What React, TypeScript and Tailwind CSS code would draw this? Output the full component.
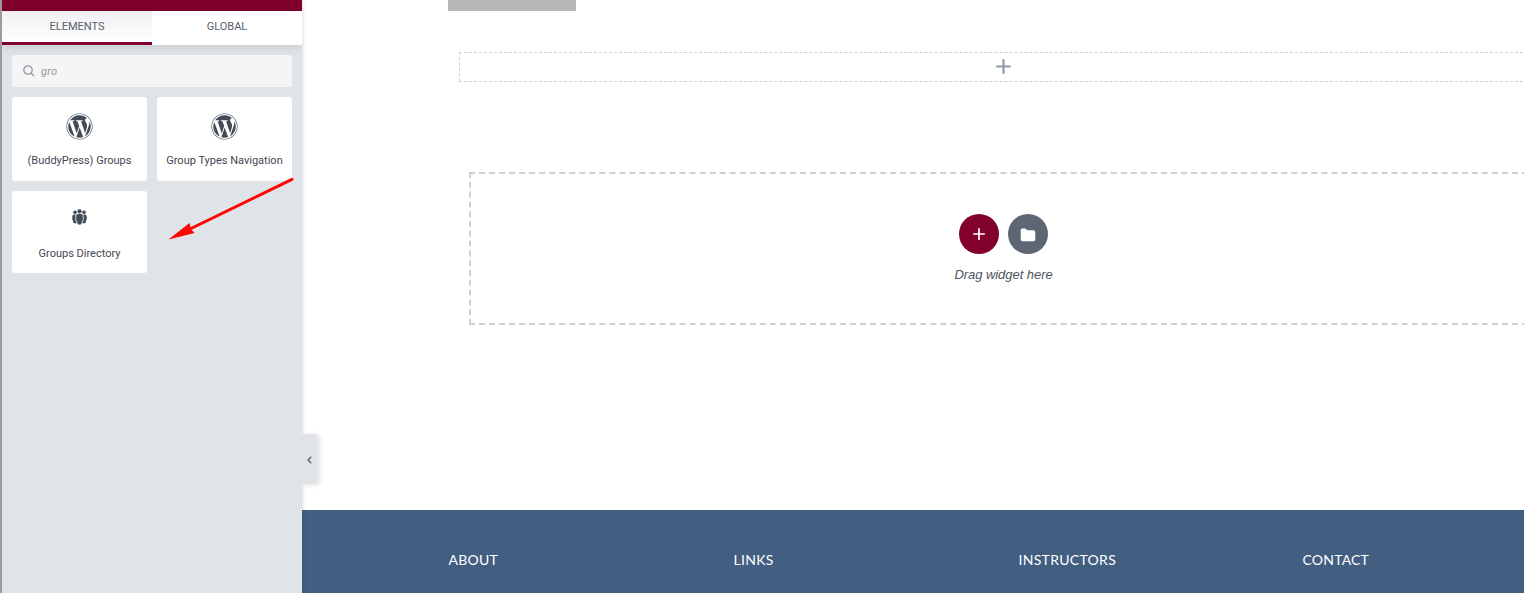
import type { ReactNode } from "react";
import { FaWordpress } from "react-icons/fa";

function GroupsIcon() {
  return (
    <svg width="15" height="16" viewBox="0 0 15 16" fill="currentColor" stroke="currentColor" strokeWidth="0.2">
      <circle cx="7.5" cy="2.2" r="2" />
      <circle cx="3" cy="3.3" r="1.7" />
      <circle cx="12" cy="3.3" r="1.7" />
      <path d="M4.2 7.2Q4.2 4.8 7.5 4.8T10.8 7.2V10.2Q10.8 12 9.6 12.8V14.2Q9.6 15.5 7.5 15.5T5.4 14.2V12.8Q4.2 12 4.2 10.2Z" />
      <path d="M3.7 5.6Q0.3 5.2 0.3 7.8V9.8Q0.3 11 1.2 11.7V13Q1.3 14.3 3.2 14.3Q4.3 14.3 4.5 13.7V13.1Q3.3 12.2 3.3 10.3V7.2Q3.3 6.3 3.7 5.6Z" />
      <path d="M11.3 5.6Q14.7 5.2 14.7 7.8V9.8Q14.7 11 13.8 11.7V13Q13.7 14.3 11.8 14.3Q10.7 14.3 10.5 13.7V13.1Q11.7 12.2 11.7 10.3V7.2Q11.7 6.3 11.3 5.6Z" />
    </svg>
  );
}

function Plus({ size, stroke }: { size: number; stroke: number }) {
  return (
    <svg width={size} height={size} viewBox="0 0 14 14" fill="none" stroke="currentColor" strokeWidth={stroke} strokeLinecap="round">
      <path d="M7 1V13M1 7H13" />
    </svg>
  );
}

function Widget({ icon, label, className }: { icon: ReactNode; label: string; className: string }) {
  return (
    <div className={`flex flex-col items-center rounded-[3px] bg-white text-[#434c56] ${className}`}>
      <div className="flex h-[27px] items-start justify-center">{icon}</div>
      <div className="whitespace-nowrap text-[11px] leading-[14px] text-[#3f4852]">{label}</div>
    </div>
  );
}

function Panel() {
  return (
    <aside className="relative z-10 flex h-full w-[302px] shrink-0 flex-col border-l-2 border-[#9b9b9d] bg-[#e0e3e8] font-[Roboto,sans-serif] shadow-[0_0_5px_rgba(0,0,0,0.2)]">
      <div className="flex h-[55px] shrink-0 flex-col overflow-hidden">
        <div className="h-[11px] shrink-0 bg-[#82002e]" />
        <div className="flex h-[34px] shrink-0 bg-white text-[11px] leading-[31px] text-[#556068] shadow-[0_2px_10px_rgba(0,0,0,0.12)]">
          <div className="w-[150px] border-b-[3px] border-[#82002e] bg-linear-to-b from-[#f0f0f3] to-white text-center">ELEMENTS</div>
          <div className="w-[150px] text-center">GLOBAL</div>
        </div>
      </div>
      <div className="mx-2.5 flex h-8 shrink-0 items-center rounded-[3px] bg-[#f5f5f5] pl-[11px] text-[#8d99a5]">
        <svg width="12" height="12" viewBox="0 0 12 12" fill="none" stroke="currentColor" strokeWidth="1.3" strokeLinecap="round">
          <circle cx="5" cy="5" r="4.2" />
          <path d="M8.2 8.2L10.7 10.7" />
        </svg>
        <span className="ml-1.5 pt-0.5 text-[11px] italic leading-4 tracking-[0.2px]">gro</span>
      </div>
      <div className="mx-2.5 mt-2.5 grid grid-cols-2 gap-2.5">
        <Widget className="h-[84px] gap-3.5 pt-4" icon={<FaWordpress size={27} />} label="(BuddyPress) Groups" />
        <Widget className="h-[84px] gap-3.5 pt-4" icon={<FaWordpress size={27} />} label="Group Types Navigation" />
        <Widget className="h-[82px] gap-[11px] pt-[18px]" icon={<GroupsIcon />} label="Groups Directory" />
      </div>
      <svg className="absolute left-[164px] top-[174px]" width="132" height="70" viewBox="166 174 132 70">
        <path d="M292 179.3L188 230" stroke="#ff0505" strokeWidth="3" strokeLinecap="round" />
        <path d="M168.5 239.5L189.5 223L191 229L194.5 233Z" fill="#ff0505" />
      </svg>
      <div className="absolute left-[300px] top-[434px] flex h-[50px] w-[15px] items-center rounded-r-[3px] bg-[#e0e3e8] pl-1 text-[#556068] shadow-[3px_1px_5px_rgba(0,0,0,0.12)]">
        <svg width="7" height="8" viewBox="0 0 6 8" fill="none" stroke="currentColor" strokeWidth="1.3" className="mt-0.5">
          <path d="M4.8 0.8L1.5 4L4.8 7.2" />
        </svg>
      </div>
    </aside>
  );
}

const footerLinks = [
  { label: "ABOUT", style: "tracking-[0.25px]" },
  { label: "LINKS", style: "tracking-[0.3px]" },
  { label: "INSTRUCTORS", style: "tracking-[0.3px]" },
  { label: "CONTACT", style: "tracking-[0.2px]" },
];

export default function App() {
  return (
    <div className="flex h-[593px] w-full overflow-hidden bg-white">
      <Panel />
      <main className="flex min-w-0 flex-1 flex-col overflow-hidden">
        <div className="ml-[146px] h-[11px] w-32 shrink-0 bg-[#b7b7b7]" />
        <div className="ml-[157px] mt-[41px] flex h-[30px] w-[1089px] shrink-0 items-center justify-center border border-dashed border-[#cdd1d6] pb-0.5 text-[#8c98a4]">
          <Plus size={15} stroke={2} />
        </div>
        <div className="ml-[167px] mt-[90px] flex h-[153px] w-[1069px] shrink-0 flex-col items-center border-2 border-dashed border-[#ccd1d7] pt-10">
          <div className="flex gap-[9px]">
            <div className="flex size-10 items-center justify-center rounded-full bg-[#82002e] text-white">
              <Plus size={12} stroke={2} />
            </div>
            <div className="flex size-10 items-center justify-center rounded-full bg-[#5f6673] text-white">
              <svg width="16" height="14" viewBox="0 0 16 14" fill="currentColor" className="mt-0.5">
                <path d="M2.3 0.5H5.2Q6 0.5 6.4 1.2L7 2.2H13.3Q15.3 2.2 15.3 4.2V11.3Q15.3 13.3 13.3 13.3H2.7Q0.7 13.3 0.7 11.3V2.2Q0.7 0.5 2.3 0.5Z" />
              </svg>
            </div>
          </div>
          <p className="mt-3 font-['Liberation_Sans',sans-serif] text-[13px] italic leading-[18px] tracking-[-0.05px] text-[#4c5661]">Drag widget here</p>
        </div>
        <footer className="mt-[185px] grid h-[83px] shrink-0 grid-cols-[285px_285px_284px_220px] bg-[#425f82] pl-[146.5px] pt-10 font-[Lato,sans-serif] text-sm leading-5 text-white">
          {footerLinks.map((link) => (
            <span key={link.label} className={link.style}>{link.label}</span>
          ))}
        </footer>
      </main>
    </div>
  );
}
